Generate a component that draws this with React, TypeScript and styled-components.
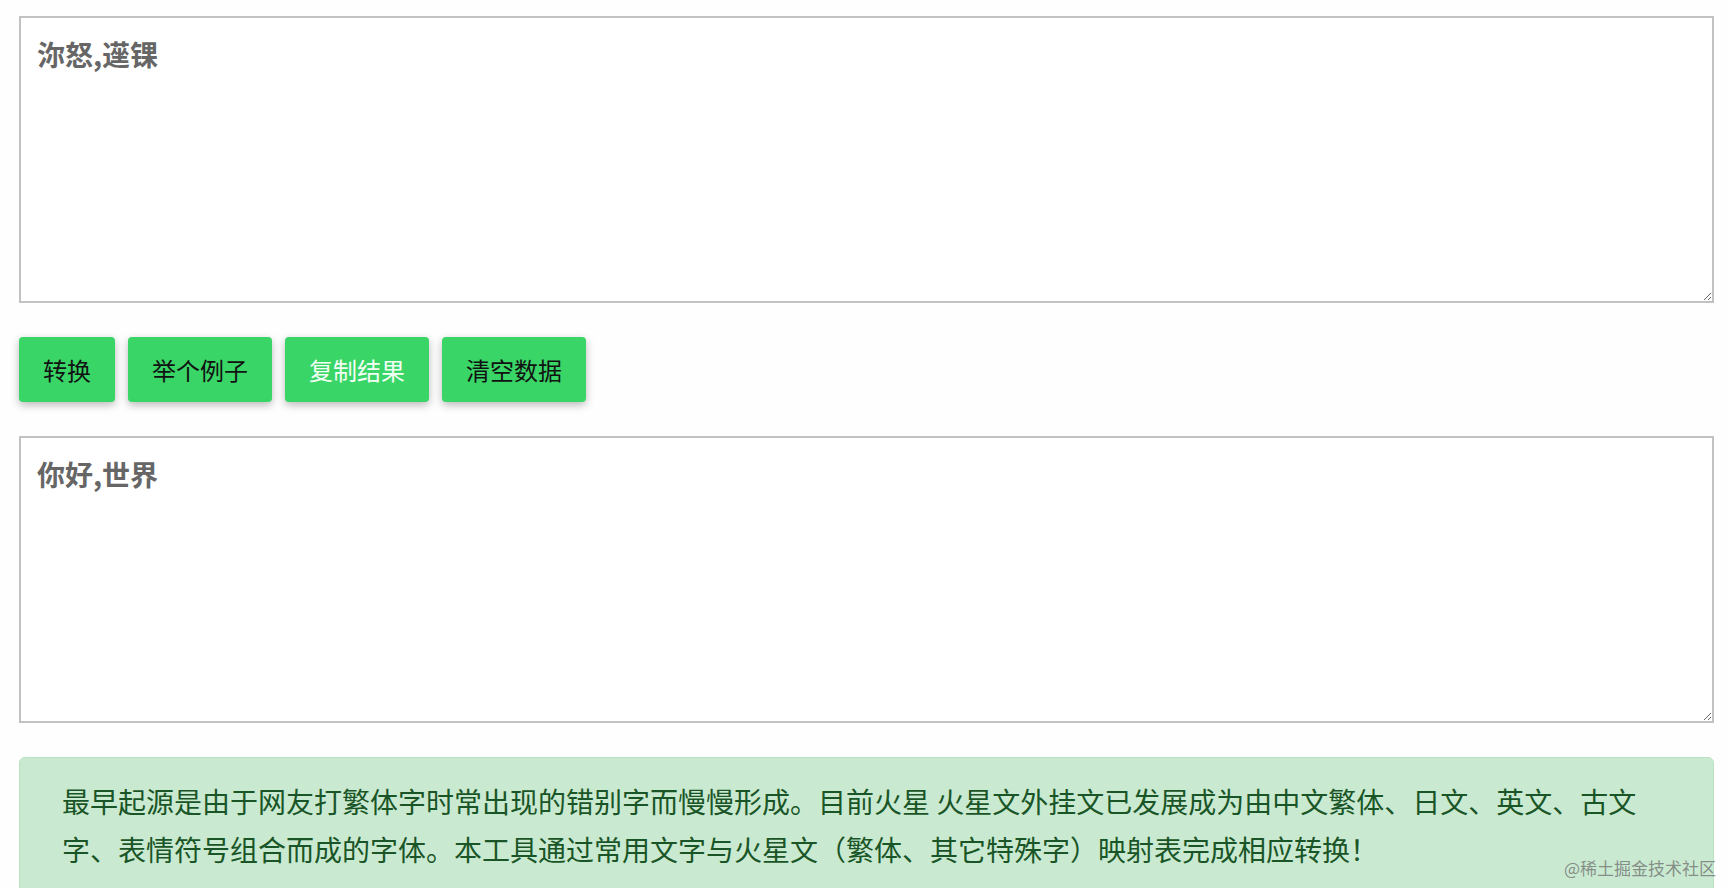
import React from 'react';
import styled, { createGlobalStyle } from 'styled-components';

const GlobalStyle = createGlobalStyle`
    html, body {
        margin: 0;
        padding: 0;
        background: #fefefe;
        font-family: "Noto Sans CJK SC", "Noto Sans", sans-serif;
    }
`

const Page = styled.div`
    position: relative;
    height: 888px;
    overflow: hidden;
    padding: 16px 14px 0 19px;
    box-sizing: border-box;
    display: flex;
    flex-direction: column;
    gap: 34px;

    & > * {
        flex-shrink: 0;
    }
`

const TextBox = styled.textarea`
    display: block;
    width: 100%;
    height: 287px;
    box-sizing: border-box;
    margin: 0;
    padding: 16px;
    border: 2px solid #c2c2c2;
    border-radius: 0;
    background: #fff;
    color: #666;
    font-family: "Noto Sans CJK SC", "Noto Sans", sans-serif;
    font-size: 28px;
    font-weight: 700;
    line-height: 1.45;
    outline: none;
`

const Toolbar = styled.div`
    display: flex;
    gap: 13px;
    height: 65px;
`

const ActionButton = styled.button<{ $light?: boolean }>`
    height: 65px;
    padding: 0 24px;
    border: none;
    border-radius: 4px;
    background: #3ad567;
    color: ${p => (p.$light ? '#f3fff5' : '#111')};
    font-family: "Noto Sans CJK SC", "Noto Sans", sans-serif;
    font-size: 24px;
    box-shadow: 0 3px 8px rgba(0, 0, 0, 0.28);
    cursor: pointer;
`

const Notice = styled.div`
    padding: 19px 60px 30px 42px;
    border: 1px solid #b8e2c2;
    border-radius: 6px;
    background: #c9ead1;
    color: #1a5527;
    font-size: 28px;
    line-height: 48px;
`

const Watermark = styled.div`
    position: absolute;
    right: 12px;
    bottom: 8px;
    color: rgba(110, 110, 110, 0.75);
    font-size: 17px;
    white-space: nowrap;
`

export default function App() {
    return (
        <>
            <GlobalStyle />
            <Page>
                <TextBox defaultValue="沵怒,遳锞" />
                <Toolbar>
                    <ActionButton>转换</ActionButton>
                    <ActionButton>举个例子</ActionButton>
                    <ActionButton $light>复制结果</ActionButton>
                    <ActionButton>清空数据</ActionButton>
                </Toolbar>
                <TextBox defaultValue="你好,世界" />
                <Notice>
                    最早起源是由于网友打繁体字时常出现的错别字而慢慢形成。目前火星 火星文外挂文已发展成为由中文繁体、日文、英文、古文字、表情符号组合而成的字体。本工具通过常用文字与火星文（繁体、其它特殊字）映射表完成相应转换！
                </Notice>
                <Watermark>@稀土掘金技术社区</Watermark>
            </Page>
        </>
    );
}
